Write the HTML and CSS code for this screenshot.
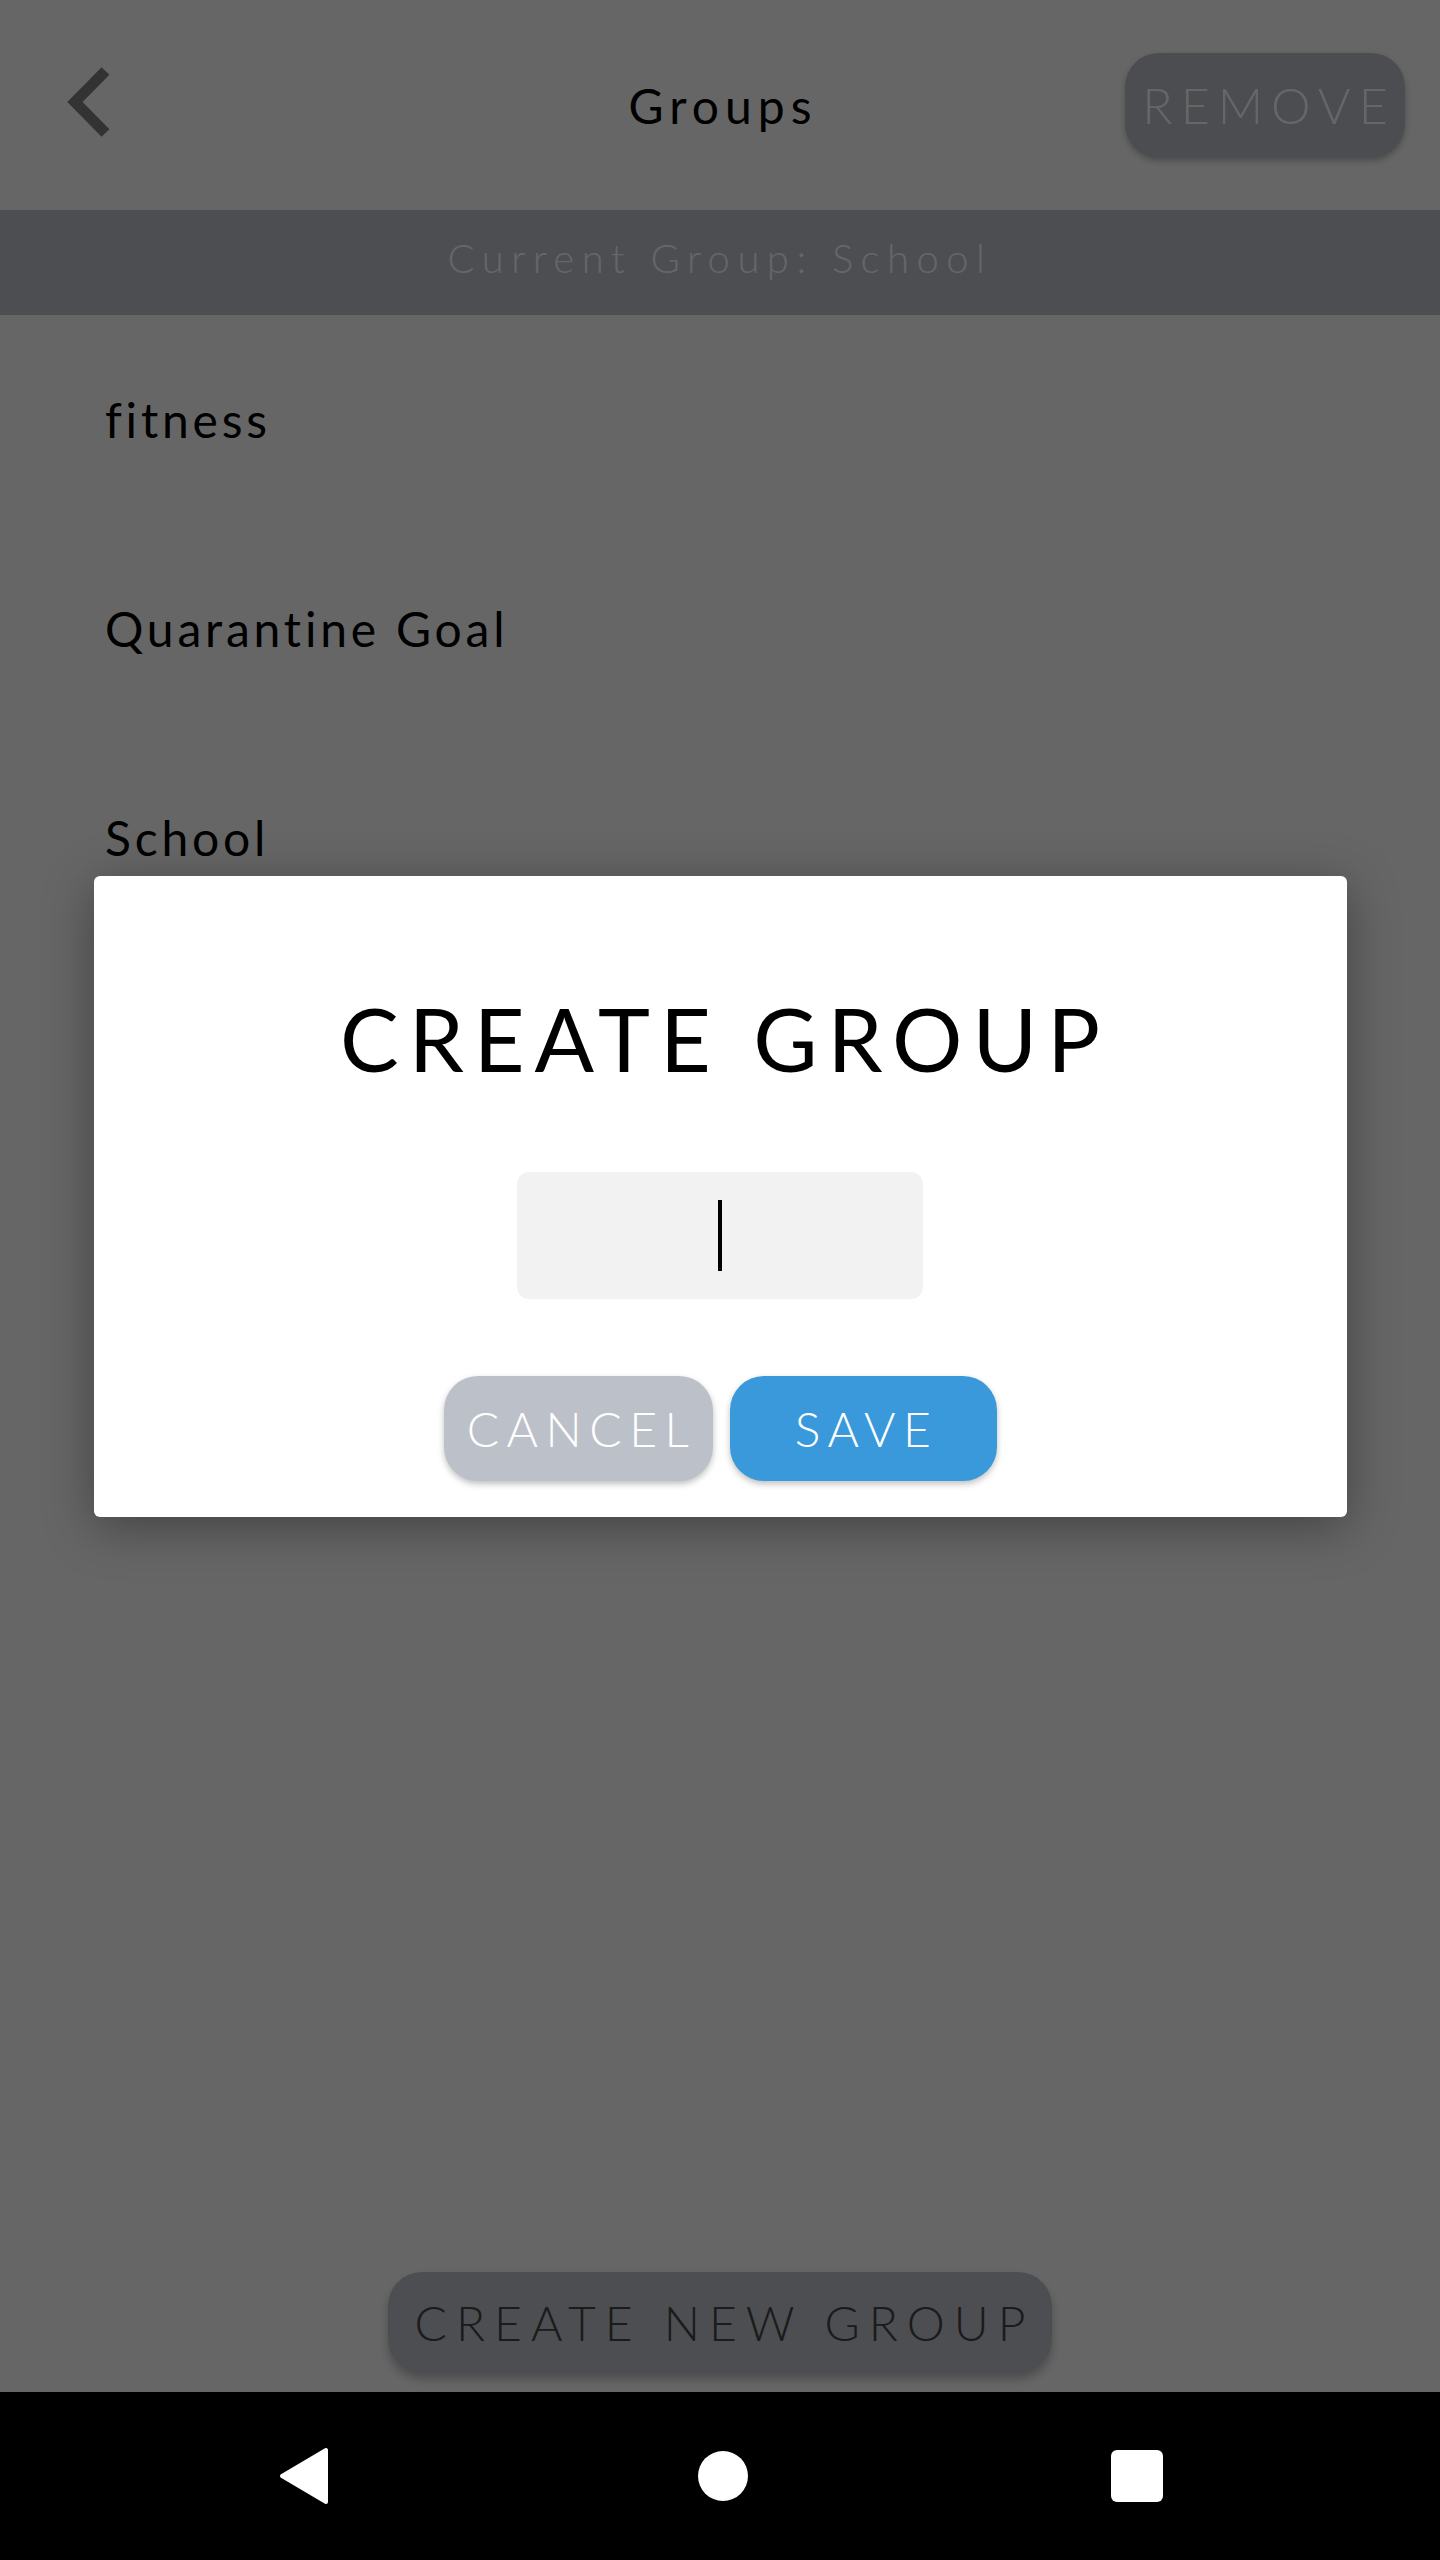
FILE: index.html
```html
<!DOCTYPE html>
<html lang="en">
<head>
<meta charset="utf-8">
<title>Groups</title>
<link rel="stylesheet" href="styles.css">
</head>
<body>
<div class="app">
  <header class="topbar">
    <div class="topbar-left">
      <button class="back" aria-label="Back">
        <svg width="50" height="80" viewBox="0 0 50 80"><polyline points="45.5,9 15,40 45.5,71" fill="none" stroke="#808080" stroke-width="11" stroke-linejoin="miter" stroke-linecap="butt"/></svg>
      </button>
    </div>
    <h1 class="title">Groups</h1>
    <div class="topbar-right">
      <button class="remove">REMOVE</button>
    </div>
  </header>
  <div class="current">Current Group: School</div>
  <ul class="groups">
    <li>fitness</li>
    <li>Quarantine Goal</li>
    <li>School</li>
  </ul>
  <div class="footer">
    <button class="create-new">CREATE NEW GROUP</button>
  </div>
</div>
<div class="scrim">
  <div class="dialog">
    <h2 class="dialog-title">CREATE GROUP</h2>
    <div class="field"><span class="caret"></span></div>
    <div class="actions">
      <button class="btn btn-cancel">CANCEL</button>
      <button class="btn btn-save">SAVE</button>
    </div>
  </div>
</div>
<nav class="sysnav">
  <svg class="nav-back" width="52" height="60" viewBox="0 0 52 60"><path d="M48 4 L48 56 L4 30 Z" fill="#fff" stroke="#fff" stroke-width="4" stroke-linejoin="round"/></svg>
  <span class="nav-home"></span>
  <span class="nav-recent"></span>
</nav>
</body>
</html>
```
FILE: styles.css
```css
html, body {
  margin: 0;
  padding: 0;
}
body {
  width: 1440px;
  height: 2560px;
  overflow: hidden;
  background: #fff;
  font-family: "Lato", "Open Sans", sans-serif;
  font-weight: 300;
  color: #000;
  position: relative;
}
button {
  font-family: inherit;
  font-weight: inherit;
  border: none;
  cursor: pointer;
}
.app {
  height: 2392px;
  display: flex;
  flex-direction: column;
  background: #fff;
}
.topbar {
  height: 210px;
  display: grid;
  grid-template-columns: 1fr auto 1fr;
  align-items: center;
}
.topbar-left {
  padding-left: 60px;
  display: flex;
  align-items: center;
  padding-bottom: 6px;
}
.back {
  background: none;
  padding: 0;
  display: flex;
}
.title {
  margin: 0;
  font-size: 48px;
  font-weight: 400;
  letter-spacing: 6px;
  padding-left: 6px;
}
.topbar-right {
  display: flex;
  justify-content: flex-end;
  padding-right: 35px;
}
.remove {
  width: 280px;
  height: 105px;
  border-radius: 34px;
  background: #bcc1c9;
  color: #fff;
  font-size: 50px;
  letter-spacing: 8px;
  padding: 0 0 0 8px;
  box-shadow: 0 3px 6px rgba(0,0,0,0.25);
}
.current {
  height: 105px;
  box-sizing: border-box;
  padding-bottom: 10px;
  background: #c0c3cd;
  color: #fff;
  font-size: 40px;
  letter-spacing: 7.5px;
  display: flex;
  align-items: center;
  justify-content: center;
}
.groups {
  list-style: none;
  margin: 0;
  padding: 0;
  flex: 1;
}
.groups li {
  height: 209px;
  display: flex;
  align-items: center;
  padding-left: 105px;
  font-size: 48px;
  font-weight: 400;
  letter-spacing: 3.8px;
}
.footer {
  display: flex;
  justify-content: center;
  padding-bottom: 19px;
}
.create-new {
  width: 664px;
  height: 101px;
  border-radius: 34px;
  background: #c1c3cb;
  color: #444;
  font-size: 48px;
  letter-spacing: 9px;
  padding: 0 0 0 9px;
  box-shadow: 0 6px 10px rgba(0,0,0,0.25);
}
.scrim {
  position: absolute;
  left: 0;
  top: 0;
  width: 1440px;
  height: 2392px;
  background: rgba(0,0,0,0.6);
  display: flex;
  align-items: center;
  justify-content: center;
}
.dialog {
  width: 1253px;
  height: 641px;
  box-sizing: border-box;
  background: #fff;
  border-radius: 6px;
  box-shadow: 0 10px 50px rgba(0,0,0,0.35);
  display: flex;
  flex-direction: column;
  align-items: center;
  padding-top: 118px;
}
.dialog-title {
  margin: 0;
  font-size: 88px;
  font-weight: 400;
  line-height: 1;
  letter-spacing: 10px;
  padding-left: 10px;
}
.field {
  margin-top: 90px;
  width: 406px;
  height: 127px;
  border-radius: 12px;
  background: #f2f2f2;
  display: flex;
  align-items: center;
  justify-content: center;
}
.caret {
  width: 4px;
  height: 71px;
  background: #000;
}
.actions {
  margin-top: 77px;
  display: flex;
  gap: 17px;
}
.btn {
  height: 105px;
  border-radius: 34px;
  color: #fff;
  font-size: 48px;
  letter-spacing: 7.5px;
  box-shadow: 0 3px 6px rgba(0,0,0,0.25);
}
.btn-cancel {
  width: 269px;
  background: #bcc1c9;
  padding: 0 0 0 7px;
}
.btn-save {
  width: 267px;
  background: #3999db;
  padding: 0 0 0 7px;
}
.sysnav {
  height: 168px;
  background: #000;
  display: flex;
  align-items: center;
  justify-content: center;
}
.nav-back {
  display: block;
  margin-right: 368px;
}
.nav-home {
  width: 50px;
  height: 50px;
  border-radius: 50%;
  background: #fff;
  margin-right: 363px;
}
.nav-recent {
  width: 52px;
  height: 52px;
  border-radius: 6px;
  background: #fff;
}
```
